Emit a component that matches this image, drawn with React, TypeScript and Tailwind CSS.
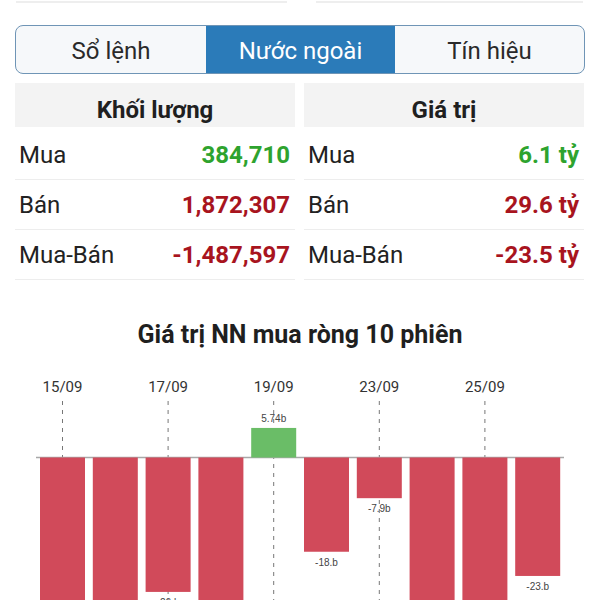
import React from 'react';

// Dữ liệu khối ngoại
const volumeRows = [
  { label: 'Mua', value: '384,710', up: true },
  { label: 'Bán', value: '1,872,307', up: false },
  { label: 'Mua-Bán', value: '-1,487,597', up: false },
];

const valueRows = [
  { label: 'Mua', value: '6.1 tỷ', up: true },
  { label: 'Bán', value: '29.6 tỷ', up: false },
  { label: 'Mua-Bán', value: '-23.5 tỷ', up: false },
];

// giá trị NN mua ròng (tỷ) của 10 phiên
const sessions = [
  { date: '15/09', value: -38, label: '-38.b' },
  { date: '16/09', value: -40, label: '-40.b' },
  { date: '17/09', value: -26.1, label: '-26.b' },
  { date: '18/09', value: -36, label: '-36.b' },
  { date: '19/09', value: 5.74, label: '5.74b' },
  { date: '22/09', value: -18.3, label: '-18.b' },
  { date: '23/09', value: -7.9, label: '-7.9b' },
  { date: '24/09', value: -39, label: '-39.b' },
  { date: '25/09', value: -41, label: '-41.b' },
  { date: '26/09', value: -23, label: '-23.b' },
];

const tabs = ['Sổ lệnh', 'Nước ngoài', 'Tín hiệu'];

function StatTable({ title, rows }: { title: string; rows: typeof volumeRows }) {
  return (
    <div className="w-[280px]">
      <div className="h-[44px] bg-[#f3f3f3] flex items-center justify-center pt-[10px]">
        <span className="text-[24px] font-bold text-[#1f1f1f] leading-[30px]">{title}</span>
      </div>
      <div className="mt-[3px]">
        {rows.map((r) => (
          <div
            key={r.label}
            className="h-[50px] flex items-center justify-between pl-[4px] pr-[5px] border-b border-[#ededed]"
          >
            <span className="text-[24px] text-[#222]">{r.label}</span>
            <span className={`text-[24px] font-bold ${r.up ? 'text-[#2ea32e]' : 'text-[#a8141e]'}`}>
              {r.value}
            </span>
          </div>
        ))}
      </div>
    </div>
  );
}

function NetChart() {
  const baseY = 457.5;
  const scale = 5.15;
  const barW = 45;
  const x0 = 40;
  const step = 52.8;

  return (
    <svg width={600} height={249} viewBox="0 351 600 249" className="block">
      {/* các đường kẻ đứt theo ngày */}
      {sessions.map((s, i) =>
        i % 2 === 0 ? (
          <g key={s.date}>
            <text
              x={x0 + i * step + barW / 2}
              y={392}
              textAnchor="middle"
              fontSize={15}
              fill="#333"
              fontFamily="Roboto, sans-serif"
            >
              {s.date}
            </text>
            <line
              x1={x0 + i * step + barW / 2}
              x2={x0 + i * step + barW / 2}
              y1={401}
              y2={600}
              stroke="#777"
              strokeWidth={1}
              strokeDasharray="4 5"
            />
          </g>
        ) : null
      )}

      {/* đường gốc */}
      <line x1={36} x2={564} y1={baseY} y2={baseY} stroke="#a8a8a8" strokeWidth={1.5} />

      {sessions.map((s, i) => {
        const x = x0 + i * step;
        const h = Math.abs(s.value) * scale;
        const y = s.value >= 0 ? baseY - h : baseY;
        const labelY = s.value >= 0 ? y - 6 : y + h + 14;
        return (
          <g key={s.date + '-bar'}>
            <rect x={x} y={y} width={barW} height={h} fill={s.value >= 0 ? '#6abd67' : '#d14a5a'} />
            {labelY < 612 && (
              <text
                x={x + barW / 2}
                y={labelY}
                textAnchor="middle"
                fontSize={10}
                fill="#444"
                fontFamily="'Liberation Sans', sans-serif"
              >
                {s.label}
              </text>
            )}
          </g>
        );
      })}
    </svg>
  );
}

export default function App() {
  return (
    <div className="w-[600px] h-[600px] overflow-hidden bg-white font-['Roboto',sans-serif]">
      {/* phần dưới của các thẻ phía trên */}
      <div className="flex pl-[16px] gap-[29px]">
        <div className="w-[271px] h-[3px] border-b-2 border-[#eeeeee]" />
        <div className="w-[267px] h-[3px] border-b-2 border-[#eeeeee]" />
      </div>

      {/* Tabs */}
      <div className="mt-[22px] mx-[15px] h-[49px] grid grid-cols-[190px_189px_1fr] border border-[#6f95b6] rounded-[8px] overflow-hidden bg-[#f6f8fa]">
        {tabs.map((t, i) => (
          <div
            key={t}
            className={`flex items-center justify-center pt-[3px] text-[24px] ${
              i === 1 ? 'bg-[#2b7bb9] text-white' : 'text-[#2a2a2a]'
            }`}
          >
            {t}
          </div>
        ))}
      </div>

      {/* Bảng khối lượng / giá trị */}
      <div className="mt-[9px] px-[15px] flex gap-[9px]">
        <StatTable title="Khối lượng" rows={volumeRows} />
        <StatTable title="Giá trị" rows={valueRows} />
      </div>

      <div className="mt-[39px] h-[32px] flex items-center justify-center">
        <span className="text-[25px] font-bold text-[#1f1f1f]">Giá trị NN mua ròng 10 phiên</span>
      </div>

      <NetChart />
    </div>
  );
}
